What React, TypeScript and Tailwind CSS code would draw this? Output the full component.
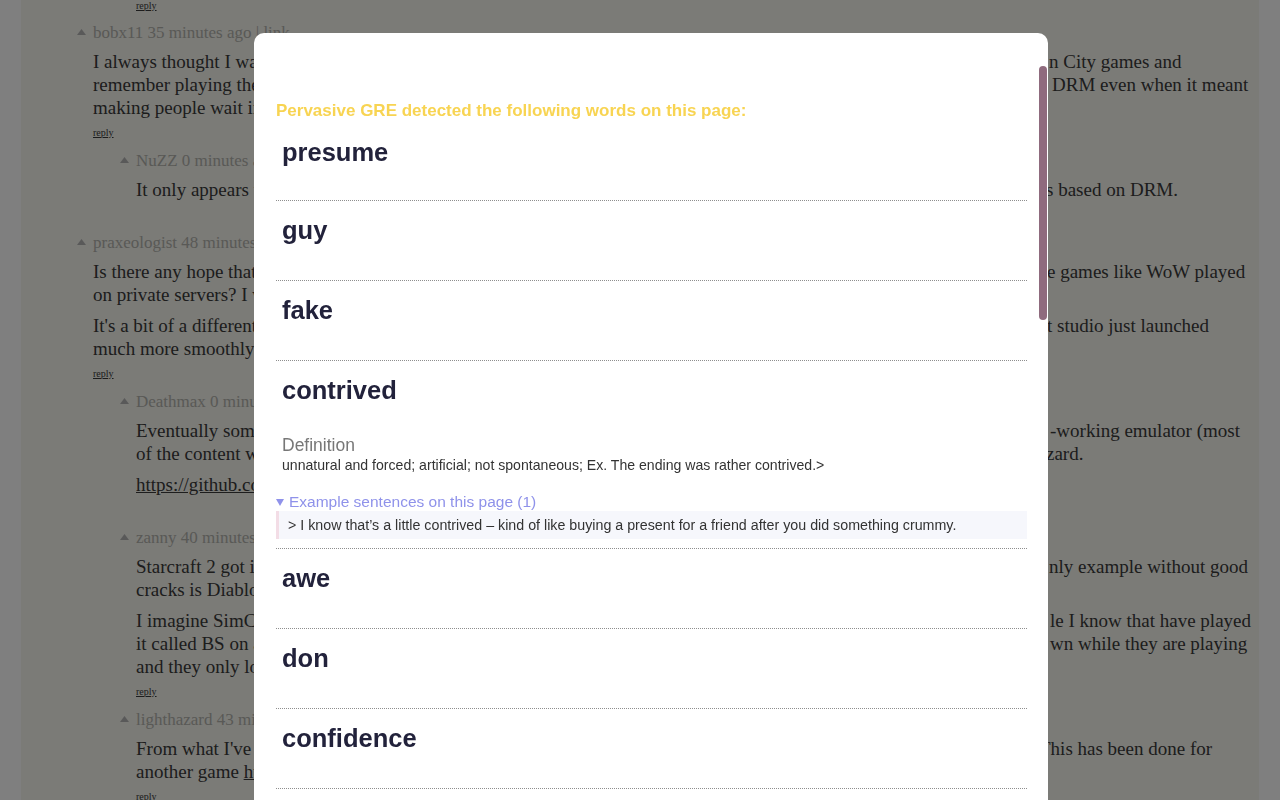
import * as React from "react";

// Hacker News style thread dimmed behind the "Pervasive GRE" word list modal.

type Line = { left: string; link?: string; right?: string; shift?: string };
type Comment = { level: 0 | 1; head: string; paras: Line[][]; reply: boolean };

const comments: Comment[] = [
  {
    level: 0,
    head: "bobx11 35 minutes ago | link",
    paras: [
      [
        { left: "I always thought I was one of the few who still enjoyed the old Su", right: "n City games and" },
        { left: "remember playing the hell out of them, back when nobody cared about", right: "DRM even when it meant", shift: "ml-[3px]" },
        { left: "making people wait in line for a disc at the store." },
      ],
    ],
    reply: true,
  },
  {
    level: 1,
    head: "NuZZ 0 minutes ago | link",
    paras: [[{ left: "It only appears that way because every big release these days i", right: "s based on DRM.", shift: "-ml-[3px]" }]],
    reply: false,
  },
  {
    level: 0,
    head: "praxeologist 48 minutes ago | link",
    paras: [
      [
        { left: "Is there any hope that this ends up the same way as some onlin", right: "e games like WoW played", shift: "-ml-[2px]" },
        { left: "on private servers? I would love to see that." },
      ],
      [
        { left: "It's a bit of a different situation, but I remember when the firs", right: "t studio just launched", shift: "-ml-[2px]" },
        { left: "much more smoothly than anyone expected." },
      ],
    ],
    reply: true,
  },
  {
    level: 1,
    head: "Deathmax 0 minutes ago | link",
    paras: [
      [
        { left: "Eventually someone will reverse the protocol and build a semi", right: "-working emulator (most", shift: "ml-[1px]" },
        { left: "of the content was already datamined, as happened with Bliz", right: "zard.", shift: "-ml-[3px]" },
      ],
      [{ left: "", link: "https://github.com/emulators/simcity-server" }],
    ],
    reply: false,
  },
  {
    level: 1,
    head: "zanny 40 minutes ago | link",
    paras: [
      [
        { left: "Starcraft 2 got it right with offline mode, and the o", right: "nly example without good", shift: "ml-[0px]" },
        { left: "cracks is Diablo 3 right now." },
      ],
      [
        { left: "I imagine SimCity will be cracked too. Most of the peop", right: "le I know that have played", shift: "ml-[1px]" },
        { left: "it called BS on always-online after the servers went do", right: "wn while they are playing", shift: "ml-[1px]" },
        { left: "and they only lost their saved cities." },
      ],
    ],
    reply: true,
  },
  {
    level: 1,
    head: "lighthazard 43 minutes ago | link",
    paras: [
      [
        { left: "From what I've read it is just a matter of time. T", right: "This has been done for", shift: "-ml-[10px]" },
        { left: "another game ", link: "https://news.ycombinator.com/item?id=5346551" },
      ],
    ],
    reply: true,
  },
];

const words = ["presume", "guy", "fake", "contrived", "awe", "don", "confidence", "ubiquitous"];

function Arrow() {
  return (
    <svg width="9" height="6" viewBox="0 0 9 6" className="-mt-[2px]">
      <path d="M4.5 0 L9 6 L0 6 Z" fill="#b3b3b3" />
    </svg>
  );
}

function Reply({ hidden }: { hidden?: boolean }) {
  return (
    <div className={hidden ? "invisible mt-2 text-[10px] leading-[12px]" : "mt-2 text-[10px] leading-[12px]"}>
      <span className="underline">reply</span>
    </div>
  );
}

function TextLine({ line, level }: { line: Line; level: 0 | 1 }) {
  return (
    <div
      className={
        level === 0
          ? "grid grid-cols-[956px_auto] whitespace-nowrap"
          : "grid grid-cols-[913px_auto] whitespace-nowrap"
      }
    >
      <span className="overflow-hidden">
        {line.left}
        {line.link && <span className="underline">{line.link}</span>}
      </span>
      {line.right && <span className={line.shift}>{line.right}</span>}
    </div>
  );
}

function CommentRow({ c }: { c: Comment }) {
  return (
    <div className={c.level === 0 ? "pl-[56px] pb-[11.5px]" : "pl-[99px] pb-[11.5px]"}>
      <div className="flex h-[20px] items-center">
        <div className="w-[16px]">
          <Arrow />
        </div>
        <span className="whitespace-nowrap text-[17px] leading-[20px] text-[#b3b3ad]">{c.head}</span>
      </div>
      <div className="pl-[16px] pt-[7.5px]">
        {c.paras.map((p, i) => (
          <div key={i} className={i > 0 ? "mt-2 text-[19px] leading-[23px]" : "text-[19px] leading-[23px]"}>
            {p.map((l, j) => (
              <TextLine key={j} line={l} level={c.level} />
            ))}
          </div>
        ))}
        <Reply hidden={!c.reply} />
      </div>
    </div>
  );
}

function WordItem({ word, first }: { word: string; first: boolean }) {
  const open = word === "contrived";
  let cls = "pl-[6px] pt-[14px] pb-[35px] text-[25.5px] leading-[30px] font-bold text-[#22223b]";
  if (first) cls = "pl-[6px] pt-[15px] pb-[33px] text-[25.5px] leading-[30px] font-bold text-[#22223b]";
  if (open) cls = "pl-[6px] pt-[14px] text-[25.5px] leading-[30px] font-bold text-[#22223b]";
  return (
    <li className={open ? "border-b border-dotted border-[#8e8e8e] pb-[9px]" : "border-b border-dotted border-[#8e8e8e]"}>
      <h3 className={cls}>{word}</h3>
      {open && (
        <div>
          <div className="mt-[29px] pl-[6px] text-[17.5px] leading-[22px] text-[#777777]">Definition</div>
          <div className="mt-[1px] pl-[6px] text-[14.1px] leading-[16px] text-[#333333]">
            unnatural and forced; artificial; not spontaneous; Ex. The ending was rather contrived.&gt;
          </div>
          <div className="mt-[20px] flex items-center gap-[5px] text-[15.5px] leading-[18px] text-[#8f92ea]">
            <svg width="8" height="7" viewBox="0 0 8 7">
              <path d="M0 0 L8 0 L4 7 Z" fill="#8f92ea" />
            </svg>
            <span>Example sentences on this page (1)</span>
          </div>
          <blockquote className="border-l-[3px] border-[#f3dde6] bg-[#f6f7fc] py-[6px] pl-[9px] text-[14.25px] leading-[16px] text-[#333333]">
            &gt; I know that’s a little contrived – kind of like buying a present for a friend after you did something
            crummy.
          </blockquote>
        </div>
      )}
    </li>
  );
}

export default function App() {
  return (
    <div className="min-h-screen overflow-hidden bg-white font-['Liberation_Serif','Times_New_Roman',serif]">
      <div className="mx-[21px] min-h-screen bg-[#f6f6ef] text-[#3a3a3a]">
        <div className="pl-[115px]">
          <div className="text-[10px] leading-[12px]">
            <span className="underline">reply</span>
          </div>
        </div>
        <div className="pt-[10.5px]">
          {comments.map((c, i) => (
            <CommentRow key={i} c={c} />
          ))}
        </div>
      </div>

      <div className="fixed inset-0 bg-black/50" />

      <div className="fixed left-[254px] top-[33px] h-[800px] w-[794px] overflow-hidden rounded-[10px] bg-white font-['Liberation_Sans',Arial,sans-serif]">
        <div className="pl-[22px] pr-[21px] pt-[67px]">
          <p className="text-[17px] leading-[22px] font-bold text-[#f8d452]">
            Pervasive GRE detected the following words on this page:
          </p>
          <ul>
            {words.map((w, i) => (
              <WordItem key={w} word={w} first={i === 0} />
            ))}
          </ul>
        </div>
        <div className="absolute right-[1px] top-[33px] h-[254px] w-[8px] rounded-full bg-[#8f6b7e]" />
      </div>
    </div>
  );
}
